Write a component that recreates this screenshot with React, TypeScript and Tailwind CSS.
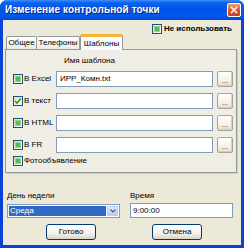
import React from "react";

function Check({ state }: { state: "ind" | "checked" }) {
  return (
    <div className="w-[10px] h-[10px] border border-[#1c5180] bg-[linear-gradient(135deg,#dcdcd7_0%,#ffffff_100%)] flex items-center justify-center shrink-0">
      {state === "ind" ? (
        <div className="w-[6px] h-[6px] bg-[#5cb85c] border border-[#8fd08c]" />
      ) : (
        <svg width="8" height="8" viewBox="0 0 8 8">
          <path d="M1 4 L3 6 L7 1.5" stroke="#21a121" strokeWidth="1.6" fill="none" />
        </svg>
      )}
    </div>
  );
}

function Dots() {
  return (
    <div className="w-[16px] h-[16px] shrink-0 border border-[#a8a594] rounded-[2px] bg-[linear-gradient(180deg,#ffffff_0%,#f1efe7_70%,#dcd8c8_100%)] shadow-[inset_-1px_-1px_0_#d6d0c0] flex items-end justify-center pb-[2px]">
      <span className="text-[7px] leading-[7px] text-[#222]">...</span>
    </div>
  );
}

function Row({ label, state, value }: { label: string; state: "ind" | "checked"; value?: string }) {
  return (
    <div className="flex items-center h-[16px]">
      <div className="w-[43px] flex items-center gap-[1px]">
        <Check state={state} />
        <span className="text-[8px] leading-[10px] text-black whitespace-nowrap">{label}</span>
      </div>
      <div className="w-[157px] h-[16px] border border-[#7f9db9] bg-white flex items-center pl-[3px]">
        <span className="text-[8px] leading-[10px] text-black">{value}</span>
      </div>
      <div className="ml-[4px]">
        <Dots />
      </div>
    </div>
  );
}

export default function App() {
  return (
    <div
      className="w-[244px] h-[248px] bg-[#0842d6] rounded-t-[7px] flex flex-col overflow-hidden"
      style={{ fontFamily: '"Liberation Sans", Arial, sans-serif' }}
    >
      <div className="h-[20px] shrink-0 flex items-center pl-[5px] pr-[3px] bg-[linear-gradient(180deg,#3d8ef8_0%,#0a62ee_14%,#0055e5_45%,#0058ee_80%,#0048cf_100%)]">
        <span className="text-white text-[10px] leading-[12px] font-bold tracking-[0.1px] [text-shadow:1px_1px_0_#0a1e6e]">
          Изменение контрольной точки
        </span>
        <div className="ml-auto w-[14px] h-[14px] rounded-[2px] border border-white bg-[linear-gradient(180deg,#f0a080_0%,#e2532a_50%,#c9401c_100%)] flex items-center justify-center">
          <svg width="8" height="8" viewBox="0 0 8 8">
            <path d="M1 1 L7 7 M7 1 L1 7" stroke="white" strokeWidth="1.6" />
          </svg>
        </div>
      </div>
      <div className="mx-[3px] mb-[3px] flex-1 bg-[#ece9d8] flex flex-col">
        <div className="flex items-center justify-end pr-[9px] pt-[3px] h-[14px] gap-[2px]">
          <Check state="ind" />
          <span className="text-[8px] leading-[10px] font-bold text-black">Не использовать</span>
        </div>
        <div className="flex items-end h-[16px] pl-[3px] relative z-10">
          <div className="w-[31px] h-[13px] mb-[1px] border border-[#919b9c] border-b-0 rounded-t-[2px] bg-[linear-gradient(180deg,#ffffff_0%,#ecebe6_100%)] flex items-center justify-center">
            <span className="text-[8px] leading-[10px]">Общее</span>
          </div>
          <div className="w-[43px] h-[13px] mb-[1px] border border-[#919b9c] border-b-0 border-l-0 rounded-t-[2px] bg-[linear-gradient(180deg,#ffffff_0%,#ecebe6_100%)] flex items-center justify-center">
            <span className="text-[8px] leading-[10px]">Телефоны</span>
          </div>
          <div className="w-[43px] h-[16px] border border-[#919b9c] border-b-0 rounded-t-[2px] bg-[#fcfcfe] border-t-[3px] border-t-[#f5b43a] flex items-center justify-center">
            <span className="text-[8px] leading-[10px]">Шаблоны</span>
          </div>
        </div>
        <div className="ml-[2px] mt-[-1px] w-[232px] h-[124px] border border-[#919b9c] bg-[#f0eee4] shadow-[1px_1px_0_#d0cdbf] pl-[7px] pt-[6px] flex flex-col">
          <div className="pl-[43px] text-[8px] leading-[10px] h-[10px]">
            <span className="ml-[8px]">Имя шаблона</span>
          </div>
          <div className="mt-[5px] flex flex-col gap-[6px]">
            <Row label="В Excel" state="ind" value="ИРР_Комн.txt" />
            <Row label="В текст" state="checked" />
            <Row label="В HTML" state="ind" />
            <Row label="В FR" state="ind" />
          </div>
          <div className="mt-[3px] h-[10px] flex items-center gap-[1px]">
            <Check state="ind" />
            <span className="text-[8px] leading-[10px]">Фотообъявление</span>
          </div>
        </div>
        <div className="mt-[18px] pl-[4px] grid grid-cols-[113px_103px] gap-x-[10px]">
          <div className="text-[8px] leading-[10px] h-[10px]">День недели</div>
          <div className="text-[8px] leading-[10px] h-[10px]">Время</div>
          <div className="mt-[3px] h-[14px] border border-[#7f9db9] bg-white flex p-[1px]">
            <div className="flex-1 bg-[#316ac5] flex items-center pl-[1px]">
              <span className="text-[8px] leading-[10px] text-white">Среда</span>
            </div>
            <div className="w-[11px] ml-[1px] rounded-[1px] bg-[linear-gradient(180deg,#e0e9fd_0%,#b9cdf7_100%)] border border-[#b8cbf4] flex items-center justify-center">
              <svg width="6" height="4" viewBox="0 0 6 4">
                <path d="M0.5 0.5 L3 3 L5.5 0.5" stroke="#4d6185" strokeWidth="1.2" fill="none" />
              </svg>
            </div>
          </div>
          <div className="mt-[2px] h-[15px] border border-[#7f9db9] bg-white flex items-center pl-[2px]">
            <span className="text-[8px] leading-[10px]">9:00:00</span>
          </div>
        </div>
        <div className="mt-[6px] flex pl-[43px] gap-[56px]">
          <div className="w-[50px] h-[16px] border border-[#003c74] rounded-[3px] bg-[linear-gradient(180deg,#ffffff_0%,#f3f2ec_60%,#d8d4c4_100%)] flex items-center justify-center">
            <span className="text-[8px] leading-[10px]">Готово</span>
          </div>
          <div className="w-[50px] h-[16px] border border-[#003c74] rounded-[3px] bg-[linear-gradient(180deg,#ffffff_0%,#f3f2ec_60%,#d8d4c4_100%)] flex items-center justify-center">
            <span className="text-[8px] leading-[10px]">Отмена</span>
          </div>
        </div>
      </div>
    </div>
  );
}
